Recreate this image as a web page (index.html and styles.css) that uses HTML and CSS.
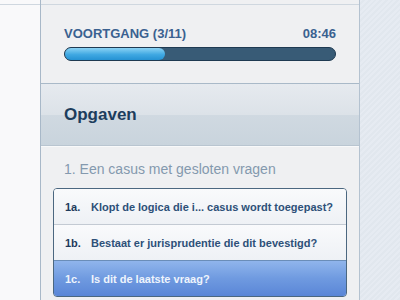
FILE: index.html
```html
<!DOCTYPE html>
<html lang="nl">
<head>
  <meta charset="UTF-8" />
  <title>Opgaven</title>
  <link rel="stylesheet" href="styles.css">
</head>
<body>
  <div class="page">
    <!-- Left gutter -->
    <div class="gutter">
      <div class="rule"></div>
    </div>

    <!-- Main panel -->
    <div class="panel">
      <div class="rule"></div>

      <div class="progress">
        <div class="progress-head">
          <span>VOORTGANG (3/11)</span>
          <span>08:46</span>
        </div>
        <div class="bar">
          <div class="bar-fill" style="width: 100px"></div>
        </div>
      </div>

      <div class="section-head">
        <h2>Opgaven</h2>
      </div>

      <div class="questions">
        <p class="case-title">1. Een casus met gesloten vragen</p>
        <ul class="question-list">
          <li><span class="num">1a.</span><span>Klopt de logica die i... casus wordt toegepast?</span></li>
          <li><span class="num">1b.</span><span>Bestaat er jurisprudentie die dit bevestigd?</span></li>
          <li class="active"><span class="num">1c.</span><span>Is dit de laatste vraag?</span></li>
        </ul>
      </div>
    </div>

    <!-- Right backdrop -->
    <div class="backdrop"></div>
  </div>
</body>
</html>
```

FILE: styles.css
```css
/* Page */
html, body {
  margin: 0;
  padding: 0;
  width: 400px;
  height: 300px;
  overflow: hidden;
  font-family: 'Liberation Sans', Arial, sans-serif;
}

.page {
  display: flex;
  height: 300px;
}

.rule {
  margin-top: 4px;
  height: 1px;
  background: #cfd7df;
}

/* Left gutter */
.gutter {
  width: 40px;
  background: #f9f9fa;
  border-right: 1px solid #a8b8c8;
}

/* Main panel */
.panel {
  width: 318px;
  background: #eff0f2;
  border-right: 1px solid #b4c2d0;
  box-shadow: 1px 0 0 #d4dde7;
}

.progress {
  padding: 0 23px;
  height: 78px;
  border-bottom: 1px solid #a9b9c8;
}

.progress-head {
  display: flex;
  justify-content: space-between;
  padding-top: 21px;
  font-size: 13px;
  font-weight: bold;
  color: #3a6190;
  line-height: 16px;
}

.bar {
  margin-top: 5px;
  height: 12px;
  border: 1px solid #1e3a52;
  border-radius: 7px;
  background: #385b76;
  overflow: hidden;
}

.bar-fill {
  height: 100%;
  border-radius: 0 7px 7px 0;
  background: linear-gradient(#8ad2f4, #3fa8e2 55%, #2592d3);
}

/* Section header */
.section-head {
  height: 61px;
  padding: 0 23px;
  display: flex;
  align-items: center;
  background: linear-gradient(#e6eaef, #dce2e8 50%, #d0d9e1 50%, #c9d4dd);
  border-bottom: 1px solid #b9c5d0;
  box-shadow: 0 1px 0 #f8f9fa;
}

h2 {
  margin: 0;
  font-size: 17px;
  color: #1d3d5d;
}

/* Questions */
.questions {
  padding: 0 12px;
}

.case-title {
  margin: 15px 11px 0;
  font-size: 14px;
  line-height: 17px;
  color: #8499ae;
}

.question-list {
  list-style: none;
  margin: 10px 0 0;
  padding: 0;
  border: 1px solid #4b6780;
  border-radius: 4px;
  overflow: hidden;
}

.question-list li {
  display: flex;
  align-items: center;
  height: 35px;
  padding: 0 11px;
  font-size: 11px;
  font-weight: bold;
  color: #2d5078;
  background: linear-gradient(#f9fafc, #eef1f5);
  border-bottom: 1px solid #c3cad3;
}

.question-list li:last-child {
  border-bottom: none;
}

.num {
  width: 26px;
  color: #1e3b5c;
}

.question-list li.active {
  color: #eef4fc;
  background: linear-gradient(#90b5ec, #6f9ae0 50%, #5a86d7);
  border-top: 1px solid #6a8db8;
  margin-top: -1px;
}

.question-list li.active .num {
  color: #eef4fc;
}

/* Right backdrop */
.backdrop {
  flex: 1;
  background: repeating-linear-gradient(135deg, #e6ebf2 0 2px, #e1e7ee 2px 4px);
}
```
